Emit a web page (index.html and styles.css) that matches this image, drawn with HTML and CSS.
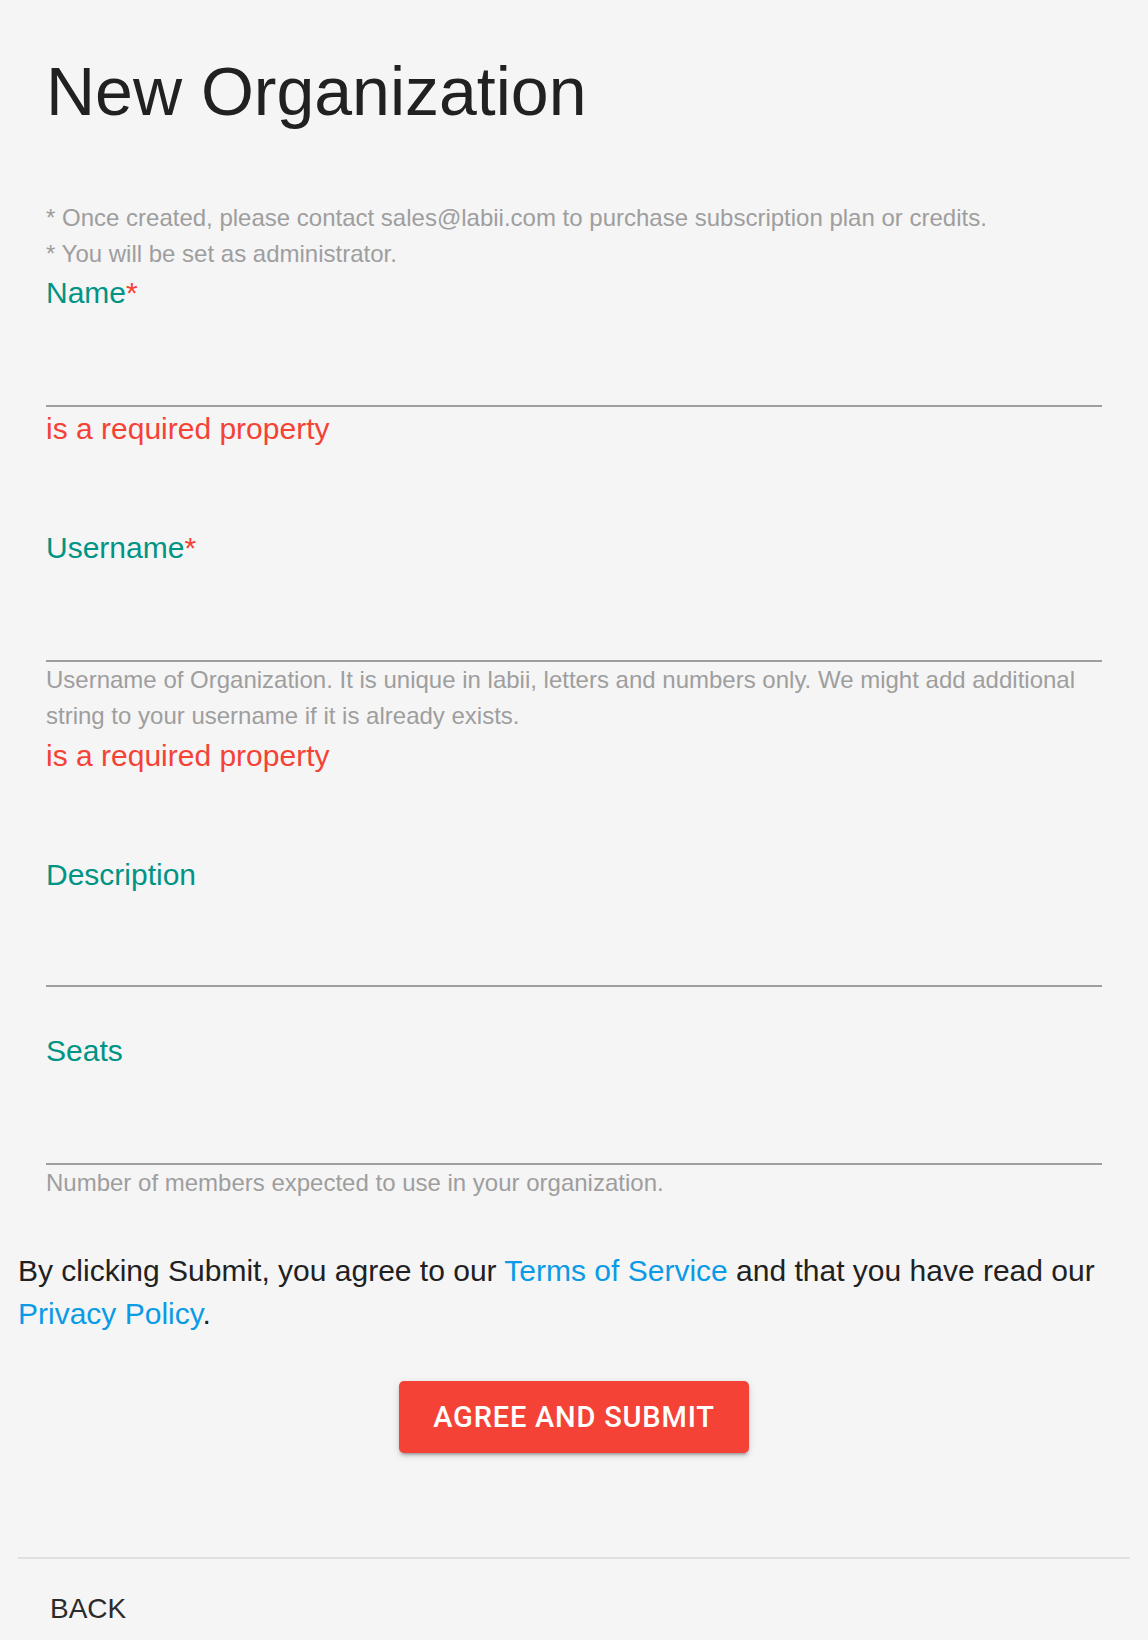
FILE: index.html
```html
<!DOCTYPE html>
<html lang="en">
<head>
<meta charset="utf-8">
<title>New Organization</title>
<link rel="stylesheet" href="styles.css">
</head>
<body>
<div class="page">
  <div class="form">
    <h1 class="title">New Organization</h1>
    <div class="notes">
      <p>* Once created, please contact sales@labii.com to purchase subscription plan or credits.</p>
      <p>* You will be set as administrator.</p>
    </div>

    <div class="field">
      <label class="label">Name<span class="req">*</span></label>
      <div class="input"></div>
      <div class="error">is a required property</div>
    </div>

    <div class="field">
      <label class="label">Username<span class="req">*</span></label>
      <div class="input"></div>
      <div class="helper">Username of Organization. It is unique in labii, letters and numbers only. We might add additional string to your username if it is already exists.</div>
      <div class="error">is a required property</div>
    </div>

    <div class="field">
      <label class="label">Description</label>
      <div class="input input-short"></div>
    </div>

    <div class="field">
      <label class="label">Seats</label>
      <div class="input"></div>
      <div class="helper">Number of members expected to use in your organization.</div>
    </div>
  </div>

  <p class="agree">By clicking Submit, you agree to our <a class="link" href="#">Terms of Service</a> and that you have read our <a class="link" href="#">Privacy Policy</a>.</p>

  <div class="actions">
    <button class="submit" type="button">Agree and Submit</button>
  </div>

  <div class="divider"></div>

  <div class="footer">
    <button class="back" type="button">BACK</button>
  </div>
</div>
</body>
</html>
```

FILE: styles.css
```css
html, body {
  margin: 0;
  padding: 0;
  background: #f5f5f5;
}

body {
  font-family: "Liberation Sans", Arial, Helvetica, sans-serif;
  color: #212121;
}

.page {
  padding: 0 18px;
}

.form {
  padding: 0 28px;
}

.title {
  margin: 0;
  padding-top: 51px;
  font-size: 68px;
  line-height: 80px;
  font-weight: 400;
  color: #212121;
}

.notes {
  margin: 69px 0 3px;
  color: #9e9e9e;
  font-size: 24px;
  line-height: 36px;
}

.notes p {
  margin: 0;
}

.field + .field {
  margin-top: 46px;
}

.label {
  display: block;
  font-size: 30px;
  line-height: 36px;
  color: #009485;
}

.req {
  color: #f44336;
}

.input {
  height: 94px;
  border-bottom: 2px solid #9e9e9e;
}

.input-short {
  height: 92px;
}

.helper {
  font-size: 24px;
  line-height: 36px;
  color: #9e9e9e;
}

.error {
  margin-top: 4px;
  padding-bottom: 37px;
  font-size: 30px;
  line-height: 36px;
  color: #f44336;
}

.agree {
  margin: 48px 0 0;
  font-size: 30px;
  line-height: 43px;
  color: #212121;
}

.link {
  color: #0b9be6;
  text-decoration: none;
}

.actions {
  display: flex;
  justify-content: center;
  margin-top: 46px;
}

.submit {
  height: 72px;
  padding: 0 34px;
  border: 0;
  border-radius: 5px;
  background: #f44336;
  color: #ffffff;
  font-family: Roboto, "Liberation Sans", sans-serif;
  font-weight: 500;
  font-size: 29px;
  line-height: 72px;
  letter-spacing: 0.8px;
  text-transform: uppercase;
  box-shadow: 0 4px 2px -3px rgba(0,0,0,0.2), 0 3px 3px 0 rgba(0,0,0,0.14), 0 2px 8px 0 rgba(0,0,0,0.12);
  cursor: pointer;
}

.divider {
  margin-top: 104px;
  height: 2px;
  background: #e0e0e0;
}

.footer {
  padding: 32px 0 14px 32px;
}

.back {
  padding: 0;
  border: 0;
  background: transparent;
  font-family: "Liberation Sans", Arial, sans-serif;
  font-size: 28px;
  line-height: 36px;
  color: #2b2b2b;
  cursor: pointer;
}
```
